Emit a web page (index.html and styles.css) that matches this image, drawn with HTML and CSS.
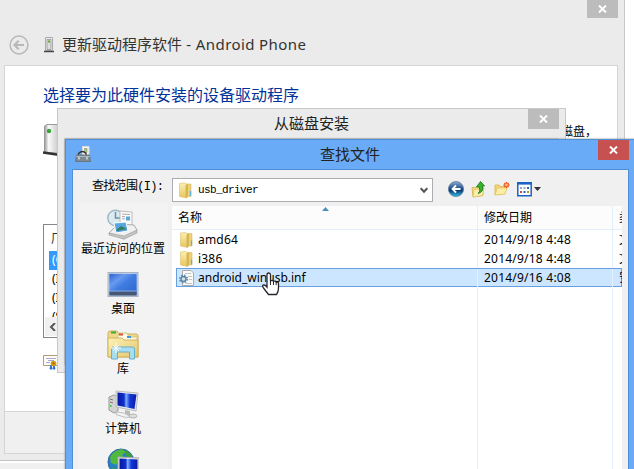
FILE: index.html
```html
<!DOCTYPE html>
<html lang="zh-CN">
<head>
<meta charset="utf-8">
<title>更新驱动程序软件</title>
<link rel="stylesheet" href="styles.css">
</head>
<body>
<svg width="0" height="0" class="defs">
  <defs>
    <linearGradient id="gold" x1="0" x2="1" y1="0" y2="1"><stop offset="0" stop-color="#fdf3b8"/><stop offset="1" stop-color="#e6c468"/></linearGradient>
    <linearGradient id="fold" x1="0" x2="0" y1="0" y2="1"><stop offset="0" stop-color="#fbf0b4"/><stop offset="1" stop-color="#e6c65c"/></linearGradient>
    <linearGradient id="scr" x1="0" x2="1" y1="0" y2="1"><stop offset="0" stop-color="#2a5fc8"/><stop offset=".3" stop-color="#6a9af0"/><stop offset=".5" stop-color="#3f7ce0"/><stop offset="1" stop-color="#2c62cc"/></linearGradient>
    <linearGradient id="mon" x1="0" x2="1"><stop offset="0" stop-color="#0618a0"/><stop offset=".35" stop-color="#1030d0"/><stop offset=".45" stop-color="#7fb0ff"/><stop offset=".65" stop-color="#1238d8"/><stop offset="1" stop-color="#0a1ca8"/></linearGradient>
    <linearGradient id="metal" x1="0" x2="1"><stop offset="0" stop-color="#999"/><stop offset=".25" stop-color="#fafafa"/><stop offset="1" stop-color="#bdbdbd"/></linearGradient>
    <linearGradient id="ball" x1="0" x2="0" y1="0" y2="1"><stop offset="0" stop-color="#8faecb"/><stop offset=".45" stop-color="#24558e"/><stop offset=".6" stop-color="#0d3c74"/><stop offset="1" stop-color="#35c0e8"/></linearGradient>
    <symbol id="folder" viewBox="0 0 16 16">
      <path d="M7 1.500h6v12.500H7z" fill="#ecd07a" stroke="#d8bb62" stroke-width=".6"/>
      <path d="M1.500 1 6.500.5 9 2v13.500L1.500 14z" fill="url(#fold)" stroke="#dcc068" stroke-width=".6"/>
      <path d="M7.500 2.500 10 1.500V14l-2.500 1.700z" fill="#d9b550"/>
      <path d="M12.500 8.500v5" stroke="#5ab0e4" stroke-width="1.300"/>
    </symbol>
    <symbol id="close" viewBox="0 0 9 8"><path d="M1 .5 8 7.500M8 .5 1 7.500" stroke="#fff" stroke-width="1.900"/></symbol>
  </defs>
</svg>

<main class="desktop">
  <section class="window wizard">
    <button class="close close-idle wizard-close"><svg width="9" height="8"><use href="#close"/></svg></button>
    <header class="wizard-title">
      <svg class="back" width="20" height="20" viewBox="0 0 20 20" fill="none" stroke="#b8b8b8"><circle cx="10" cy="10" r="8.900" stroke-width="1.500"/><path d="M15 10H6M9.700 5.800 5.500 10l4.200 4.200" stroke-width="2.200"/></svg>
      <svg class="device" width="10" height="16" viewBox="0 0 10 16"><path d="M1.500.5h7v13h-7z" fill="#eee" stroke="#aaa"/><path d="M3 2.500h4v10H3z" fill="#ddd" stroke="#888" stroke-width=".7"/><path d="M4 3.500h2v2H4z" fill="#5aae20"/><path d="M0 14.500h10" stroke="#444" stroke-width="1.500"/></svg>
      <h1>更新驱动程序软件<span> - Android Phone</span></h1>
    </header>
    <div class="wizard-page">
      <h2>选择要为此硬件安装的设备驱动程序</h2>
      <div class="hint">
        <svg width="22" height="32" viewBox="0 0 22 32"><path d="M1.500 2 4 .5h14v29L1.500 28z" fill="url(#metal)" stroke="#999"/><circle cx="6" cy="7" r="2.200" fill="#36a436"/><path d="M0 28.500 17 31" stroke="#333" stroke-width="2.500"/></svg>
        <span>磁盘，</span>
      </div>
      <div class="models">
        <div class="models-head">厂商</div>
        <div class="model chosen">(C</div><div class="model">(I</div><div class="model">(I</div><div class="model cut">(S</div>
        <div class="models-scroll"><svg width="7" height="8" viewBox="0 0 7 8"><path d="M6 0 2 4l4 4" fill="none" stroke="#555" stroke-width="2"/></svg></div>
      </div>
      <svg class="cert" width="20" height="16" viewBox="0 0 20 16"><path d="M.5 1.500h19v10H.5z" fill="#fffdf2" stroke="#b09a80"/><path d="M3 4.500h10M5 6.500h6M3 8.500h4" stroke="#a4a9dc"/><path d="m8 11-1 4h2zm3 0 1 4h-2z" fill="#2c6ad0" stroke="#2c6ad0"/><circle cx="10.500" cy="9.500" r="2.800" fill="#d69a12"/><circle cx="10.500" cy="9.500" r="1" fill="#9a6500"/></svg>
    </div>
    <footer class="wizard-foot"></footer>
  </section>

  <section class="window disk">
    <header><h3>从磁盘安装</h3><button class="close close-idle"><svg width="9" height="8"><use href="#close"/></svg></button></header>
    <div class="disk-body"></div>
  </section>

  <section class="window finder">
    <header>
      <svg class="tool" width="16" height="16" viewBox="0 0 16 16"><path d="M7.500.5h6.500v9H7.500z" fill="#f4f4f4" stroke="#ddd"/><path d="M9.500 2.500h2.500v4H9.500z" fill="#9bd060" stroke="#888" stroke-width=".6"/><path d="M3.500 9V7.500q4-4 7.500 0V9" fill="none" stroke="#333" stroke-width="1.300"/><path d="M1.500 9h13l1 6.500H.5z" fill="#7c8b96" stroke="#687682"/><path d="M1 10.500h14" stroke="#aab6be"/><path d="M4 11v2.500m8-2.500v2.500" stroke="#dfe6e8" stroke-width="1.300"/></svg>
      <h3>查找文件</h3>
      <button class="close close-live"><svg width="9" height="8"><use href="#close"/></svg></button>
    </header>
    <div class="client">
      <div class="toolbar">
        <label>查找范围(I):</label>
        <div class="combo"><svg width="16" height="17"><use href="#folder"/></svg><span>usb_driver</span><svg class="chev" width="8" height="7" viewBox="0 0 8 7"><path d="m.7 1.200 3.300 3.600 3.300-3.600" fill="none" stroke="#555" stroke-width="2"/></svg></div>
        <div class="tools">
          <svg width="16" height="16" viewBox="0 0 16 16"><circle cx="8" cy="8" r="7.600" fill="url(#ball)" stroke="#567898" stroke-width=".7"/><path d="M12.500 8H5M8 4.500 4.500 8 8 11.500" fill="none" stroke="#fff" stroke-width="1.800"/></svg>
          <svg width="16" height="17" viewBox="0 0 16 17"><path d="M1 6.500h4l1-1h6v9l-10 1.500z" fill="#f4dc80" stroke="#d8ba5c"/><path d="m3 8.500 10-1-1.500 7-9.500 1.500z" fill="#fbedab" stroke="#dcc064" stroke-width=".7"/><path d="M7 12.500q3-2 1-6.500H5.500l4-5.500L13.500 5h-2q1.500 6-4.500 7.500z" fill="#35b52c" stroke="#1c7a22" stroke-width=".9"/></svg>
          <svg width="16" height="16" viewBox="0 0 16 16"><path d="M1 14V4h4l1 1.500h5v2" fill="#f2d47c" stroke="#ddbc60"/><path d="m1 14 2-7h10l-2 6z" fill="#fdeea6" stroke="#e6c86c"/><path d="M12.500 1v6M9.500 4h6M10.400 1.900l4.200 4.200m0-4.200-4.200 4.200" stroke="#ea4a1c" stroke-width="1.300"/><circle cx="12.500" cy="4" r="1.400" fill="#ffc060"/></svg>
          <svg class="views" width="24" height="15" viewBox="0 0 24 15"><path d="M.8.8h13.400v13H.8z" fill="#fff" stroke="#1a62c8" stroke-width="1.500"/><path d="M0 1.300h15" stroke="#1a62c8" stroke-width="2.600"/><path d="M3 9h2v2H3z" fill="#d84b38"/><path d="M3 5h2v2H3zM6.500 5h2v2h-2z" fill="#93a7c0"/><path d="M6.500 9h2v2h-2zM10 5h2v2h-2z" fill="#2b63ba"/><path d="M10 9h2v2h-2z" fill="#bb912a"/><path d="M17 5h7l-3.500 4z" fill="#333"/></svg>
        </div>
      </div>
      <div class="panes">
        <nav>
          <a><svg width="32" height="32" viewBox="0 0 32 32"><circle cx="8.500" cy="10" r="7.700" fill="#dcebf0" stroke="#a2b8c4" stroke-width="1.500"/><path d="M8.500 4v6h5" fill="none" stroke="#6b90a8" stroke-width="1.500"/><path d="m13 3 12 1v14l-12 3z" fill="#fafafa" stroke="#bbb"/><path d="m15 6 8 .5m-8 2 3 .2m-3 2 3 .2" stroke="#aaa"/><path d="M19 8.500h4v4h-4z" fill="#5ba6d8"/><path d="m2 25 15 6 13-9-3-5-16-1z" fill="#f0f0f0" stroke="#aaa"/><path d="m2 25 15 3 13-6v3l-13 6-15-4z" fill="#c5c5c2" stroke="#999" stroke-width=".6"/><path d="m7 15 12-1 2 9-12 2z" fill="#55a8e4" stroke="#fff"/><path d="m9 22 5-4 6 3-10 2z" fill="#377e5e"/></svg><span>最近访问的位置</span></a>
          <a><svg width="32" height="32" viewBox="0 2 32 32"><path d="M.5 6h31v25H.5z" fill="#a8b5c8"/><path d="M2 7.500h28v22H2z" fill="url(#scr)" stroke="#dbe4f0" stroke-width=".6"/><path d="M2.500 25.500h27v4h-27z" fill="#455773"/><path d="M2.500 25h27" stroke="#88a8d8"/></svg><span>桌面</span></a>
          <a><svg width="32" height="32" viewBox="0 -1 32 32"><path d="M1 4q0-2 2-2h7l2 3h17q2 0 2 2v21H1z" fill="#efd889" stroke="#cfb063"/><path d="M12 4h8l2 4h8v8H8z" fill="#fffbe8" stroke="#d8c37c"/><path d="M4 3.500h5" stroke="#39ad35" stroke-width="2"/><path d="M12 5.500h4" stroke="#d84d34" stroke-width="2"/><path d="M20 8h4" stroke="#3b98dc" stroke-width="2"/><path d="M1 9h14l2 2h14v17H1z" fill="url(#gold)" stroke="#d2b35e"/><path d="M4.500 30V20q0-2 2-2h19q2 0 2 2v10h-5v-7h-12v7z" fill="#a8ddf0" stroke="#65b0cf"/><path d="M9 14v10M4 19h10M6 16l6 6m0-6-6 6" stroke="#fff"/></svg><span>库</span></a>
          <a><svg width="32" height="32" viewBox="0 -1 32 32"><path d="m2 8 5-2 4 2v14l-4 2-5-3z" fill="#d4d4d4" stroke="#999"/><path d="m3 10 3 1m-3 2 3 1" stroke="#777"/><path d="M3 17h1.500" stroke="#43c73b" stroke-width="2"/><path d="m9 2 22 2-2 18-20-4z" fill="#e2e5e8" stroke="#b8bcc2"/><path d="m10.500 3.500 19 2-2 14.500-17-3.500z" fill="url(#mon)"/><path d="m18 21 5 1v4h-5z" fill="#bbb"/><path d="m9 23 8 1 7 4-5 .5-10-3z" fill="#f4f4f4" stroke="#c0c0c0"/><ellipse cx="26" cy="27" rx="4" ry="2" fill="#ddd" stroke="#b5b5b5"/></svg><span>计算机</span></a>
          <a><svg width="32" height="32" viewBox="0 0 32 32"><circle cx="14" cy="14" r="13" fill="#277fc8" stroke="#2d65a0"/><path d="M3 9q4-7 12-8l4 3-4 3 2 3-5 2-3 5-5-2z" fill="#53b83e"/><path d="m19 2 6 5-1 4-5-3zM4 19l6 2v5z" fill="#3da03b"/><path d="m11 9 21 1v18H11z" fill="#e5e7ea" stroke="#aaa"/><path d="m12.500 10.500 18 1V27h-18z" fill="url(#mon)"/></svg></a>
        </nav>
        <div class="files">
          <div class="row head"><div class="cell">名称<svg class="sort" width="7" height="4" viewBox="0 0 7 4"><path d="M3.500 0 7 4H0z" fill="#4c91b5"/></svg></div><div class="cell">修改日期</div><div class="cell">类型</div></div>
          <div class="row"><div class="cell"><svg width="16" height="16"><use href="#folder"/></svg><span class="short">amd64</span></div><div class="cell date">2014/9/18 4:48</div><div class="cell">文件夹</div></div>
          <div class="row"><div class="cell"><svg width="16" height="16"><use href="#folder"/></svg><span class="short">i386</span></div><div class="cell date">2014/9/18 4:48</div><div class="cell">文件夹</div></div>
          <div class="row selected"><div class="cell"><svg width="16" height="16" viewBox="0 0 16 16"><path d="M3.500.5H12L14.500 3v12.500h-11z" fill="#fafafa" stroke="#aaa"/><path d="M6 3.500h6M9 6.500h4M10 9.500h3M7 13.500h6" stroke="#c3c3c3"/><circle cx="4.500" cy="9" r="3.800" fill="none" stroke="#6088a8" stroke-width="1.500" stroke-dasharray="1.500 1.500"/><circle cx="4.500" cy="9" r="2.500" fill="#cfe0ec" stroke="#5a82a4" stroke-width="1.400"/></svg><span>android_winusb.inf</span></div><div class="cell date">2014/9/16 4:08</div><div class="cell">安装信息</div></div>
          <div class="row rest"><div class="cell"></div><div class="cell"></div><div class="cell"></div></div>
        </div>
      </div>
    </div>
  </section>
  <svg class="cursor" width="19" height="24" viewBox="0 0 19 24"><path d="M6 14V3q0-2 1.700-2T9.500 3v6q2-1.500 3 .5 2-1 2.700.8 2.300-.8 2.300 1.700v4q0 4-2 6.500H7.500L2.500 16q-2-3 .5-3 1.500 0 3 2z" fill="#fff" stroke="#26262e" stroke-width="1.300"/><path d="M9.500 9v4m3-3.500V13m2.700-2.500V13" stroke="#26262e"/></svg>
</main>
</body>
</html>
```
FILE: styles.css
```css
* { box-sizing: border-box; }
body { margin: 0; overflow: hidden; background: #fff; color: #000; font: 12px/18px "Noto Sans", "Noto Sans CJK SC", sans-serif; }
h1, h2, h3 { margin: 0; font-weight: 400; white-space: nowrap; }
svg { display: block; flex: none; }
button { border: 0; padding: 0; }
.defs { position: absolute; }
.desktop { position: relative; width: 634px; height: 469px; overflow: hidden; background: linear-gradient(#fff 463px, #f0f0f0 463px); }
.window { position: absolute; }
.close { display: grid; place-items: center; width: 31px; flex: none; }
.close-idle { background: #bcbcbc; }
.close-live { background: #c75050; }

.wizard { left: 0; top: 0; width: 625px; height: 461px; padding: 0 6px 7px 4px; background: #ebebeb; border-right: 1px solid #c8c8c8; border-bottom: 1px solid #c4c4c4; }
.wizard-close { height: 18px; margin-left: auto; padding-right: 1px; }
.wizard-title { display: flex; align-items: center; height: 47px; padding: 6px 0 0 5px; }
.wizard-title .device { margin: 0 8px 0 15px; }
.wizard-title h1 { margin-top: -2px; font: 15px/24px "Noto Sans CJK SC", sans-serif; color: #333; }
.wizard-title h1 span { font-family: "Noto Sans", sans-serif; white-space: pre; letter-spacing: .4px; }
.wizard-page { height: 347px; padding: 16px 20px 0 38px; background: #fff; border: 1px solid #d5d5d5; }
.wizard-page h2 { font: 16px/24px "Noto Sans CJK SC", sans-serif; color: #003399; }
.hint { display: flex; justify-content: space-between; margin-top: 18px; }
.hint span { margin-top: -1px; line-height: 18px; }
.models { width: 300px; height: 114px; margin-top: 68px; padding: 1px; border: 1px solid #828790; }
.models-head { height: 25px; padding: 4px 6px 0; color: #333; }
.model { height: 19px; margin-left: 4px; padding-left: 3px; }
.chosen { background: #3399ff; color: #fff; }
.cut { height: 10px; overflow: hidden; }
.models-scroll { height: 19px; margin-top: -1px; padding: 6px 4px; background: #f0f0f0; position: relative; }
.cert { margin-top: 16px; }
.wizard-foot { height: 42px; background: #f0f0f0; border: 1px solid #d5d5d5; border-top: 0; }

.disk { left: 57px; top: 108px; width: 509px; height: 265px; padding: 0 6px 7px; background: #ebebeb; border: 1px solid #c8c8c8; }
.disk header { display: flex; justify-content: flex-end; height: 29px; }
.disk h3 { flex: 1; padding-left: 31px; text-align: center; font: 15px/27px "Noto Sans CJK SC", sans-serif; color: #222; }
.disk .close { height: 20px; }
.disk-body { height: 227px; background: #f0f0f0; border: 1px solid #c8c8c8; }

.finder { left: 65px; top: 139px; width: 570px; height: 340px; padding: 0 5px 0 6px; background: #6aabf7; border: 1px solid #4f8fd6; box-shadow: 0 0 2px #8c8c8c; }
.finder header { display: flex; height: 29px; }
.finder .tool { margin: 6px 0 0 3px; }
.finder h3 { flex: 1; padding-left: 11px; text-align: center; font: 15px/27px "Noto Sans CJK SC", sans-serif; color: #222; }
.finder .close { height: 20px; }
.client { width: 557px; height: 310px; padding: 8px 6px 0; background: #f0f0f0; border: 1px solid #4f8fd6; }
.toolbar { display: flex; height: 25px; }
.toolbar label { width: 93px; padding-left: 13px; font: 12px/19px "Liberation Mono", "Noto Sans CJK SC", monospace; letter-spacing: -.7px; white-space: nowrap; }
.combo { display: flex; align-items: center; width: 261px; height: 24px; padding: 0 4px 0 5px; background: #fff; border: 1px solid #acacb2; }
.combo span { margin-left: 4px; font: 11px/18px "Liberation Mono", monospace; letter-spacing: -.6px; }
.chev { margin-left: auto; }
.tools { display: flex; gap: 7px; padding: 3px 0 0 15px; }
.tools .views { margin-top: 1px; }
.panes { display: flex; height: 280px; }
nav { width: 89px; padding-right: 1px; background: #f3f3f3; }
nav a { display: flex; flex-direction: column; align-items: center; height: 60px; padding-top: 5px; white-space: nowrap; }
nav span { line-height: 18px; }
.files { width: 450px; margin: 3px 0 0 4px; overflow: hidden; background: #fff; }
.row { display: grid; grid-template-columns: 302px 135px 60px; height: 19px; margin-left: 4px; }
.cell { display: flex; align-items: center; padding-left: 6px; border-right: 1px solid #e3effb; white-space: nowrap; }
.cell:first-child { padding-left: 3px; gap: 3px; }
.date { letter-spacing: .22px; }
.short { letter-spacing: .2px; }
.head { height: 24px; margin-left: 0; padding-left: 4px; background: #fcfcfc; border-bottom: 1px solid #e3effb; position: relative; }
.head .cell:first-child { padding-left: 2px; }
.sort { position: absolute; left: 150px; top: 1px; }
.selected { background: #cde6ff; border: 1px solid #66a0e0; grid-template-columns: 301px 135px 60px; }
.selected .cell:first-child { padding-left: 2px; }
.rest { height: 200px; }
.cursor { position: absolute; left: 261px; top: 272px; }
```
